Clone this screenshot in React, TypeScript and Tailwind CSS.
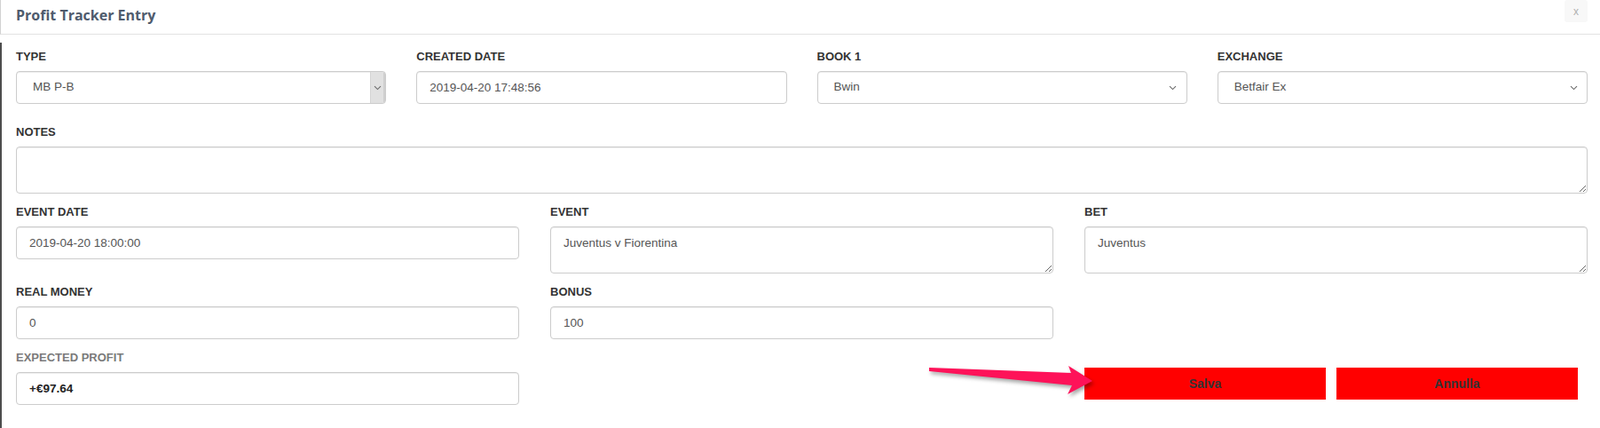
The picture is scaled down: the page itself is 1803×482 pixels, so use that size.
import React from "react";

function Label({ children, muted }: { children: React.ReactNode; muted?: boolean }) {
  return (
    <div
      className={
        "mb-[8px] text-[13px] font-bold uppercase leading-[16px] " +
        (muted ? "text-[#7a7a7a]" : "text-[#333333]")
      }
    >
      {children}
    </div>
  );
}

function Chevron() {
  return (
    <svg width="9" height="6" viewBox="0 0 9 6" fill="none">
      <path d="M1 1.2 L4.5 4.6 L8 1.2" stroke="#6b6b6b" strokeWidth="1.1" />
    </svg>
  );
}

function TextInput({ value, bold }: { value: string; bold?: boolean }) {
  return (
    <input
      readOnly
      value={value}
      className={
        "h-[37px] w-full rounded-[4px] border border-[#cccccc] bg-white px-[14px] text-[13.5px] shadow-[inset_0_1px_1px_rgba(0,0,0,0.075)] outline-none " +
        (bold ? "font-bold text-[#222222]" : "text-[#555555]")
      }
    />
  );
}

function SelectBox({ value, native }: { value: string; native?: boolean }) {
  return (
    <div className="flex h-[37px] w-full items-stretch overflow-hidden rounded-[4px] border border-[#cccccc] bg-white text-[13.5px] text-[#555555] shadow-[inset_0_1px_1px_rgba(0,0,0,0.075)]">
      <div className="flex flex-1 items-center pl-[18px]">{value}</div>
      {native ? (
        <div className="flex w-[17px] items-center justify-center border-l border-[#d4d4d4] border-r-2 border-r-[#cfcfcf] bg-[#e1e1e1]">
          <Chevron />
        </div>
      ) : (
        <div className="flex w-[26px] items-center justify-center pr-[4px]">
          <Chevron />
        </div>
      )}
    </div>
  );
}

function Area({ value }: { value?: string }) {
  return (
    <textarea
      readOnly
      defaultValue={value}
      className="block h-[53px] w-full rounded-[4px] border border-[#cccccc] bg-white px-[14px] pt-[9px] text-[13.5px] leading-[18px] text-[#555555] shadow-[inset_0_1px_1px_rgba(0,0,0,0.075)] outline-none"
    />
  );
}

export default function App() {
  return (
    <div className="relative flex min-h-[482px] w-full flex-col bg-white font-['Liberation_Sans',Arial,sans-serif]">
      {/* Header */}
      <div className="flex h-[39px] items-start justify-between border-b border-l border-[#e3e3e3] border-l-[#d2d2d2] pl-[17px] pr-[14px]">
        <h1 className="pt-[5px] font-['Open_Sans',sans-serif] text-[16px] font-bold leading-[24px] text-[#4f5b6d]">
          Profit Tracker Entry
        </h1>
        <div className="flex h-[25px] w-[26px] items-center justify-center rounded-[3px] bg-[#f8f8f8] text-[12px] text-[#b0b0b0]">
          x
        </div>
      </div>

      <div className="h-[9px]" />

      {/* Body */}
      <div className="flex-1 border-l-2 border-[#4d4d4d] pl-[16px] pr-[14px] pt-[8px]">
        <div className="grid grid-cols-4 gap-x-[34px]">
          <div>
            <Label>Type</Label>
            <SelectBox value="MB P-B" native />
          </div>
          <div>
            <Label>Created Date</Label>
            <TextInput value="2019-04-20 17:48:56" />
          </div>
          <div>
            <Label>Book 1</Label>
            <SelectBox value="Bwin" />
          </div>
          <div>
            <Label>Exchange</Label>
            <SelectBox value="Betfair Ex" />
          </div>
        </div>

        <div className="mt-[24px]">
          <Label>Notes</Label>
          <Area />
        </div>

        <div className="mt-[13px] grid grid-cols-3 items-start gap-x-[35px]">
          <div>
            <Label>Event Date</Label>
            <TextInput value="2019-04-20 18:00:00" />
          </div>
          <div>
            <Label>Event</Label>
            <Area value="Juventus v Fiorentina" />
          </div>
          <div>
            <Label>Bet</Label>
            <Area value="Juventus" />
          </div>
        </div>

        <div className="mt-[13px] grid grid-cols-3 items-start gap-x-[35px]">
          <div>
            <Label>Real Money</Label>
            <TextInput value="0" />
          </div>
          <div>
            <Label>Bonus</Label>
            <TextInput value="100" />
          </div>
          <div />
        </div>

        <div className="mt-[13px] grid grid-cols-3 items-start gap-x-[35px]">
          <div>
            <Label muted>Expected Profit</Label>
            <TextInput value="+€97.64" bold />
          </div>
          <div />
          <div className="mt-[19px] grid grid-cols-2 gap-x-[12px] pr-[11px]">
            <button className="h-[36px] bg-[#ff0000] text-[14px] font-bold text-[#333333]">Salva</button>
            <button className="h-[36px] bg-[#ff0000] text-[14px] font-bold text-[#333333]">Annulla</button>
          </div>
        </div>
      </div>

      {/* annotation arrow */}
      <svg
        className="pointer-events-none absolute left-0 top-0 drop-shadow-[2px_3px_2px_rgba(0,0,0,0.35)]"
        width="1803"
        height="482"
        viewBox="0 0 1803 482"
      >
        <polygon
          points="1047,414 1207,420 1204,412 1231,429 1203,444 1208,434 1047,418"
          fill="#fe1259"
        />
      </svg>
    </div>
  );
}
